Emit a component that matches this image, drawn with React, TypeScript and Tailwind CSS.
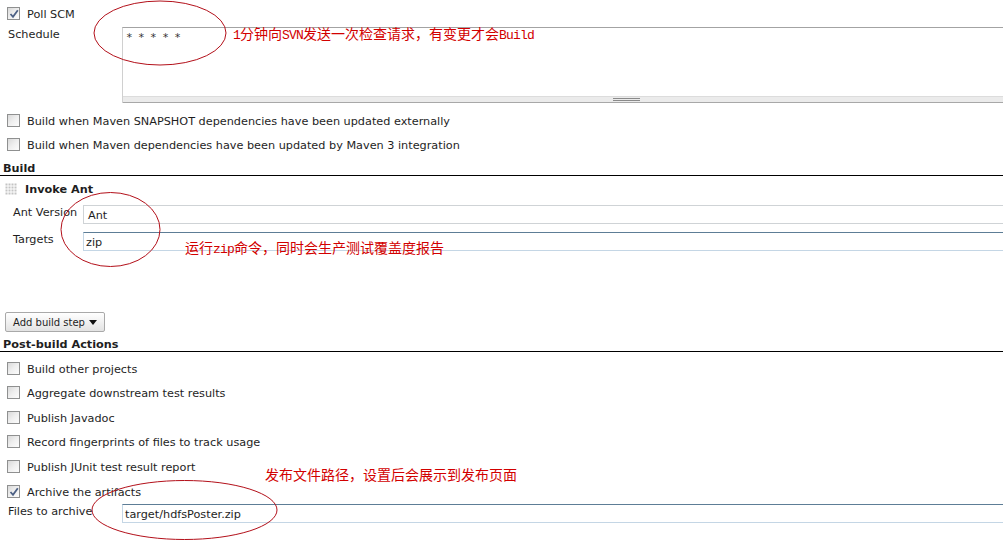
import React from "react";

const Box = ({ checked = false }: { checked?: boolean }) => (
  <span className="relative inline-block w-[13px] h-[13px] shrink-0 border border-[#8f9090] bg-gradient-to-br from-[#d9d9d9] via-[#efefef] to-[#fcfcfc]">
    {checked && (
      <svg className="absolute left-[1px] top-[1px]" width="10" height="10" viewBox="0 0 10 10">
        <path d="M1.5 5 L4 7.8 L8.8 1.2" fill="none" stroke="#4d6185" strokeWidth="1.8" />
      </svg>
    )}
  </span>
);

const CheckRow = ({ label, checked = false, mt }: { label: string; checked?: boolean; mt: string }) => (
  <div className={`flex items-center h-[13px] pl-[7px] gap-[7px] ${mt}`}>
    <Box checked={checked} />
    <span className="leading-[13px] pt-[1px] whitespace-nowrap">{label}</span>
  </div>
);

const Handle = () => (
  <svg width="12" height="12" viewBox="0 0 12 12">
    {[0, 3, 6, 9].map((y) =>
      [0, 3, 6, 9].map((x) => <rect key={`${x}-${y}`} x={x + 0.5} y={y + 0.5} width="2" height="2" fill="#c4c4c4" />)
    )}
  </svg>
);

const Mono = ({ children }: { children: React.ReactNode }) => (
  <span className="font-['Liberation_Mono',monospace] text-[13px] tracking-[-0.8px]">{children}</span>
);

export default function App() {
  return (
    <div className="relative w-[1003px] h-[546px] overflow-hidden bg-white text-[11.25px] leading-[13px] text-[#1e1e1e] font-['DejaVu_Sans','Verdana',sans-serif]">
      {/* Poll SCM */}
      <CheckRow label="Poll SCM" checked mt="mt-[7px]" />

      {/* Schedule */}
      <div className="flex mt-[7px] h-[76px]">
        <div className="w-[122px] pl-[8px] pt-[1px] leading-[13px]">Schedule</div>
        <div className="flex-1 mr-[-3px] flex flex-col border-t border-t-[#a3a3a3] border-l border-l-[#d0d0d0]">
          <div className="flex-1 pl-[3px] pt-[4px] text-[11px] tracking-[-0.6px] leading-[12px] font-['DejaVu_Sans_Mono',monospace] text-[#333]">* * * * *</div>
          <div className="relative h-[7px] border-t border-t-[#dcdcdc] border-b border-b-[#a8a8a8] bg-[#ebebeb]">
            <div className="absolute left-[490px] top-[1px] w-[27px] h-[3px] border-t border-b border-[#8a8a8a]" />
          </div>
        </div>
      </div>

      <CheckRow label="Build when Maven SNAPSHOT dependencies have been updated externally" mt="mt-[11px]" />
      <CheckRow label="Build when Maven dependencies have been updated by Maven 3 integration" mt="mt-[11px]" />

      {/* Build header */}
      <div className="mt-[10px] h-[15px] pl-[3px] border-b border-black font-bold leading-[15px]">Build</div>

      {/* Invoke Ant */}
      <div className="mt-[7px] h-[12px] flex items-center pl-[5px] gap-[8px]">
        <Handle />
        <span className="font-bold leading-[13px] pt-[1px]">Invoke Ant</span>
      </div>

      <div className="mt-[10px] flex items-start h-[19px]">
        <div className="w-[83px] pl-[13px] pt-[1px] leading-[13px] whitespace-nowrap">Ant Version</div>
        <div className="flex-1 mr-[-3px] h-[19px] border border-[#cfd3d6] pl-[4px] pt-[3px] leading-[13px]">Ant</div>
      </div>

      <div className="mt-[8px] flex items-start h-[19px]">
        <div className="w-[83px] pl-[13px] pt-[1px] leading-[13px]">Targets</div>
        <div className="flex-1 mr-[-3px] h-[19px] border border-[#c4d6e5] border-t-[#5d7d96] pl-[2px] pt-[3px] leading-[13px]">zip</div>
      </div>

      {/* Add build step */}
      <div className="mt-[61px] pl-[5px]">
        <div className="w-[100px] h-[20px] flex items-center justify-center gap-[4px] rounded-[2px] border border-[#a9a9a9] bg-gradient-to-b from-white to-[#e3e3e3] text-[10px]">
          <span>Add build step</span>
          <svg width="8" height="5" viewBox="0 0 8 5">
            <path d="M0 0 L8 0 L4 5 Z" fill="#111" />
          </svg>
        </div>
      </div>

      {/* Post-build header */}
      <div className="mt-[5px] h-[15px] pl-[3px] border-b border-black font-bold leading-[15px]">Post-build Actions</div>

      <CheckRow label="Build other projects" mt="mt-[10px]" />
      <CheckRow label="Aggregate downstream test results" mt="mt-[11px]" />
      <CheckRow label="Publish Javadoc" mt="mt-[12px]" />
      <CheckRow label="Record fingerprints of files to track usage" mt="mt-[11px]" />
      <CheckRow label="Publish JUnit test result report" mt="mt-[12px]" />
      <CheckRow label="Archive the artifacts" checked mt="mt-[12px]" />

      <div className="mt-[6px] flex items-start h-[19px]">
        <div className="w-[122px] pl-[8px] pt-[1px] leading-[13px] whitespace-nowrap">Files to archive</div>
        <div className="flex-1 mr-[-3px] h-[19px] border border-[#c4d6e5] border-t-[#5d7d96] pl-[2px] pt-[3px] leading-[13px]">target/hdfsPoster.zip</div>
      </div>

      {/* Annotations */}
      <svg className="absolute left-0 top-0 pointer-events-none" width="1003" height="546">
        <ellipse cx="160" cy="33" rx="66" ry="32" fill="none" stroke="#b3101a" strokeWidth="1" />
        <ellipse cx="110.5" cy="229.5" rx="49.5" ry="37" fill="none" stroke="#b3101a" strokeWidth="1" />
        <ellipse cx="184.5" cy="510" rx="92.5" ry="29.5" fill="none" stroke="#b3101a" strokeWidth="1" />
      </svg>

      <div className="absolute left-[233px] top-[24px] text-[14px] leading-[18px] text-[#d20000] whitespace-nowrap font-['Noto_Sans_CJK_SC',sans-serif]">
        <Mono>1</Mono>分钟向<Mono>SVN</Mono>发送一次检查请求，有变更才会<Mono>Build</Mono>
      </div>
      <div className="absolute left-[185px] top-[238px] text-[14px] leading-[18px] text-[#d20000] whitespace-nowrap font-['Noto_Sans_CJK_SC',sans-serif]">
        运行<Mono>zip</Mono>命令，同时会生产测试覆盖度报告
      </div>
      <div className="absolute left-[265px] top-[465px] text-[14px] leading-[18px] text-[#d20000] whitespace-nowrap font-['Noto_Sans_CJK_SC',sans-serif]">
        发布文件路径，设置后会展示到发布页面
      </div>
    </div>
  );
}
